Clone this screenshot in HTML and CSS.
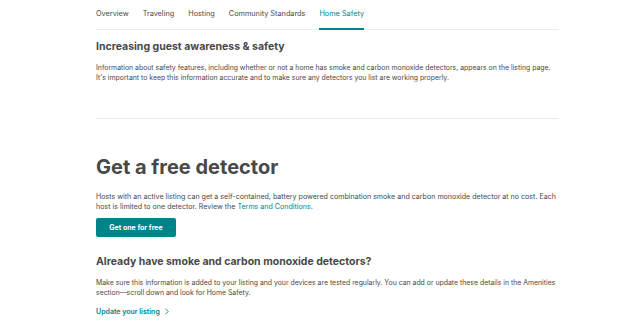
FILE: index.html
```html
<!DOCTYPE html>
<html lang="en">
<head>
    <meta charset="utf-8" />
    <meta name="viewport" content="width=device-width, initial-scale=1.0" />
    <title>Home Safety</title>
    <link rel="stylesheet" href="styles.css">
</head>
<body>
    <div class="pagina">
        <nav class="menu">
            <a class="menu_item" href="#">Overview</a>
            <a class="menu_item" href="#">Traveling</a>
            <a class="menu_item" href="#">Hosting</a>
            <a class="menu_item" href="#">Community Standards</a>
            <a class="menu_item menu_item--activo" href="#">Home Safety</a>
        </nav>

        <section class="bloque bloque--conciencia">
            <h2 class="subtitulo">Increasing guest awareness &amp; safety</h2>
            <p class="texto">Information about safety features, including whether or not a home has smoke and carbon monoxide detectors, appears on the listing page. It's important to keep this information accurate and to make sure any detectors you list are working properly.</p>
        </section>

        <section class="bloque bloque--detector">
            <h1 class="titulo">Get a free detector</h1>
            <p class="texto texto--ancho">Hosts with an active listing can get a self-contained, battery powered combination smoke and carbon monoxide detector at no cost. Each host is limited to one detector. Review the <a class="enlace" href="#">Terms and Conditions.</a></p>
            <a class="boton" href="#">Get one for free</a>
        </section>

        <section class="bloque bloque--actualizar">
            <h2 class="subtitulo">Already have smoke and carbon monoxide detectors?</h2>
            <p class="texto">Make sure this information is added to your listing and your devices are tested regularly. You can add or update these details in the Amenities section—scroll down and look for Home Safety.</p>
            <a class="enlace enlace--fuerte" href="#">Update your listing
                <svg class="flecha" width="6" height="7" viewBox="0 0 6 7"><path d="M1.5 0.8 L4.2 3.5 L1.5 6.2" fill="none" stroke="#008489" stroke-width="0.9"/></svg>
            </a>
        </section>
    </div>
</body>
</html>
```

FILE: styles.css
```css
* {
    padding: 0;
    margin: 0;
    box-sizing: border-box;
}

body {
    font-family: Inter, "Noto Sans", sans-serif;
    background-color: #fff;
    color: #484848;
}

.pagina {
    width: 463px;
    margin-left: 96px;
}

.menu {
    display: flex;
    gap: 14px;
    height: 30px;
    border-bottom: 1px solid #ebebeb;
}

.menu_item {
    display: flex;
    align-items: center;
    padding-bottom: 2px;
    font-size: 7.3px;
    color: #484848;
    text-decoration: none;
    border-bottom: 2px solid transparent;
    margin-bottom: -1px;
}

.menu_item--activo {
    color: #008489;
    border-bottom-color: #008489;
}

.bloque--conciencia {
    padding-top: 10px;
    padding-bottom: 35px;
    border-bottom: 1px solid #ebebeb;
}

.bloque--detector {
    padding-top: 35px;
}

.bloque--actualizar {
    padding-top: 18px;
}

.subtitulo {
    font-size: 10.5px;
    font-weight: 700;
    line-height: 14px;
    margin-bottom: 9px;
}

.titulo {
    font-size: 20px;
    font-weight: 700;
    line-height: 26px;
    margin-bottom: 12px;
}

.texto {
    font-size: 6.9px;
    line-height: 10px;
    color: #484848;
}

.texto--ancho {
    font-size: 7.1px;
}

.enlace {
    color: #008489;
    text-decoration: none;
}

.enlace--fuerte {
    display: inline-flex;
    align-items: center;
    gap: 4px;
    margin-top: 8px;
    font-size: 7px;
    font-weight: 600;
}

.boton {
    display: inline-block;
    margin-top: 6px;
    width: 80px;
    height: 19px;
    line-height: 19px;
    text-align: center;
    background-color: #008489;
    color: #fff;
    font-size: 7px;
    font-weight: 700;
    text-decoration: none;
    border-radius: 2px;
}
```
